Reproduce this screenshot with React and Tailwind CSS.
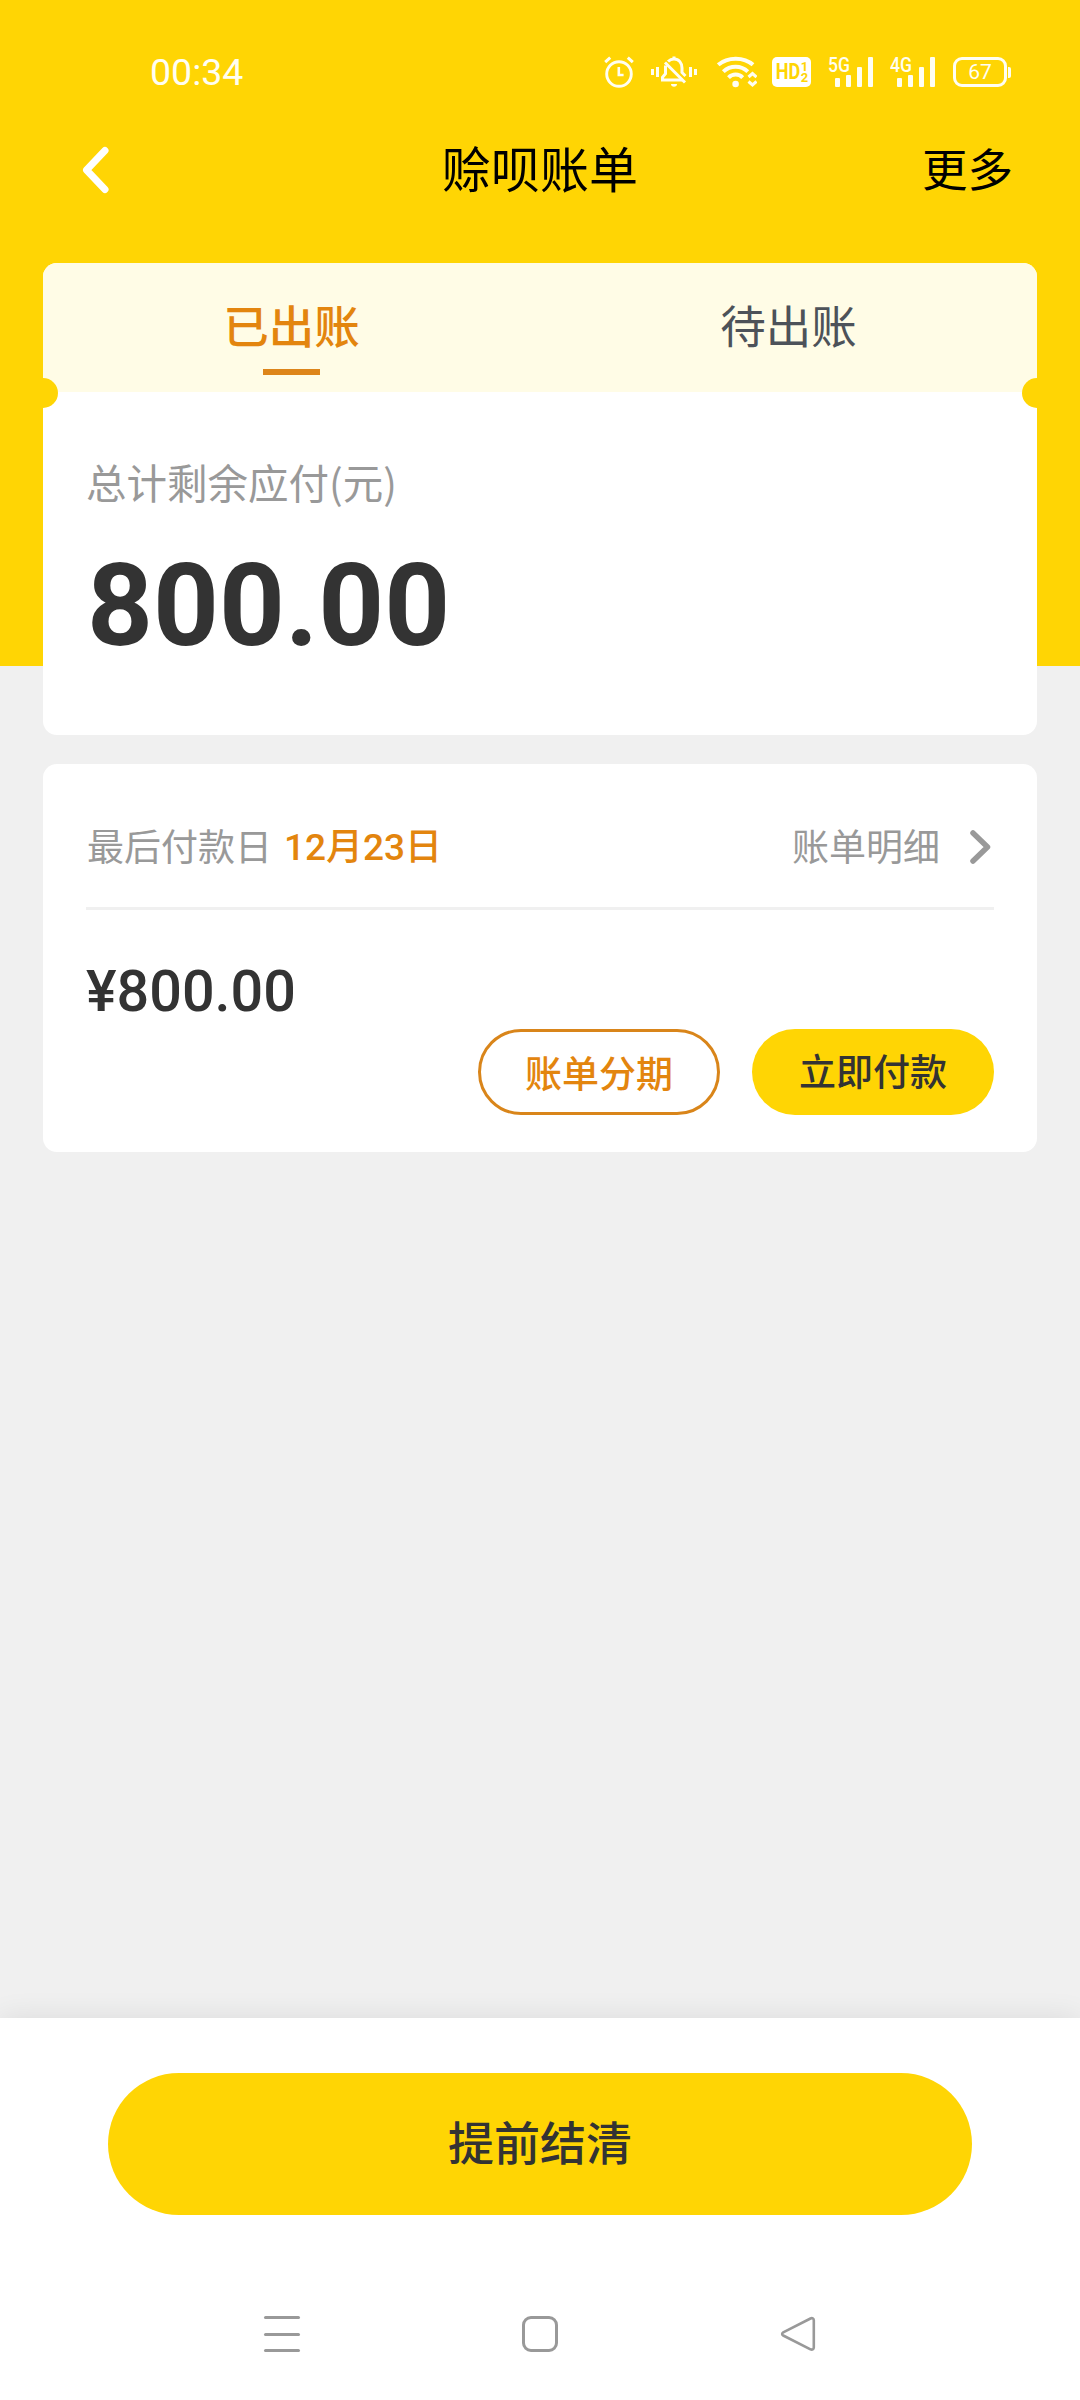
import { useState } from 'react'
import clsx from 'clsx'

function AlarmIcon() {
  return (
    <svg className="w-[30px] h-[32px]" viewBox="0 0 30 32" fill="none" stroke="currentColor">
      <circle cx="15" cy="18" r="12.3" strokeWidth="2.9" />
      <path d="M14.8 11v8h4.8" strokeWidth="2.6" />
      <path d="M1.2 6.2 6.2 1.6M28.8 6.2 23.8 1.6" strokeWidth="3" />
    </svg>
  )
}

function MuteIcon() {
  return (
    <svg className="w-[46px] h-[32px]" viewBox="0 0 46 32" fill="none" stroke="currentColor" strokeWidth="3">
      <path d="M1.5 13v6M6.5 11v10M39.5 11v10M44.5 13v6" />
      <path d="M17 5.5C19 3.6 21 3 23 3c5 0 8 4 8 9v4.5l3.500 3.500" />
      <path d="M14 6.500 34 26.500" />
      <path d="M14.500 9.500v8.200l-3 3.500v2.800h20" />
      <path d="M23 .5v3" />
      <path d="M20 28h6c0 1.800-1.200 2.800-3 2.800s-3-1-3-2.800Z" fill="currentColor" stroke="none" />
    </svg>
  )
}

function WifiIcon() {
  return (
    <svg className="w-[40px] h-[32px]" viewBox="0 0 40 32" fill="none" stroke="currentColor">
      <path d="M1.200 8.800C10.500 .6 27 .6 36 8.800" strokeWidth="4" />
      <path d="M6.300 15.600c7-6.600 17.700-6.600 24.500 0" strokeWidth="4" />
      <path d="M11.500 21.600c4-4 10.400-4 14.200 0" strokeWidth="4" />
      <circle cx="18.600" cy="28" r="3.300" fill="currentColor" stroke="none" />
      <path d="m31.500 21 4-3.500 4 3.500M31.500 25.500l4 3.500 4-3.500" strokeWidth="3" />
    </svg>
  )
}

function HdIcon() {
  return (
    <div className="w-[39px] h-[30px] rounded-[5px] bg-white flex items-center justify-center text-[#ffd504] font-bold font-[Roboto,sans-serif]">
      <span className="text-[22px] leading-[30px] inline-block scale-x-[0.82] -ml-[3px] -mr-[2px]">HD</span>
      <span className="flex flex-col text-[13px] leading-[11px] -mr-px">
        <span>1</span>
        <span>2</span>
      </span>
    </div>
  )
}

function Signal({ label }) {
  return (
    <div className="relative w-[45px] h-[30px]">
      <span className="absolute left-0 top-0 text-[20px] leading-[16px] font-[Roboto,sans-serif] font-medium origin-left scale-x-[0.88]">
        {label}
      </span>
      <div className="flex h-full items-end justify-end gap-[6px]">
        <i className="w-[5px] h-[9px] rounded-[1px] bg-current" />
        <i className="w-[5px] h-[12px] rounded-[1px] bg-current" />
        <i className="w-[5px] h-[20px] rounded-[1px] bg-current" />
        <i className="w-[5px] h-[30px] rounded-[1px] bg-current" />
      </div>
    </div>
  )
}

function Battery({ level }) {
  return (
    <div className="flex items-center gap-px">
      <div className="w-[54px] h-[30px] rounded-[9px] border-[3px] border-current flex items-center justify-center text-[21px] leading-[24px] font-[Roboto,sans-serif]">
        {level}
      </div>
      <div className="w-[3px] h-[11px] rounded-r-[2px] bg-current" />
    </div>
  )
}

function StatusBar() {
  return (
    <div className="h-[104px] pt-[40px] pl-[150px] pr-[69px] flex items-center justify-between text-[#fffef2]">
      <span className="font-[Roboto,sans-serif] text-[37.5px] leading-[64px]">00:34</span>
      <div className="flex items-center">
        <AlarmIcon />
        <div className="ml-[17px]"><MuteIcon /></div>
        <div className="ml-[20px]"><WifiIcon /></div>
        <div className="ml-[15px]"><HdIcon /></div>
        <div className="ml-[17px]"><Signal label="5G" /></div>
        <div className="ml-[17px]"><Signal label="4G" /></div>
        <div className="ml-[18px]"><Battery level={67} /></div>
      </div>
    </div>
  )
}

const tabs = [
  { key: 'billed', label: '已出账' },
  { key: 'pending', label: '待出账' }
]

function App() {
  const [activeTab, setActiveTab] = useState('billed')

  return (
    <div className="w-[1080px] h-[2400px] flex flex-col bg-[#f0f0f0] overflow-hidden font-['Noto_Sans_CJK_SC',sans-serif] text-[#333]">
      {/* Header */}
      <header className="h-[666px] shrink-0 bg-[#ffd504]">
        <StatusBar />
        <div className="h-[125px] pl-[82px] pr-[67px] grid grid-cols-[200px_1fr_200px] items-center text-black">
          <button>
            <svg className="w-[27px] h-[48px] relative top-[3px]" viewBox="0 0 27 48" fill="none" stroke="#fff" strokeWidth="7" strokeLinecap="round" strokeLinejoin="round">
              <path d="M23 4.5 4.5 24 23 43.5" />
            </svg>
          </button>
          <h1 className="text-[49px] leading-[64px] text-center pr-[15px]">赊呗账单</h1>
          <button className="text-[45.5px] leading-[64px] text-right">更多</button>
        </div>
      </header>

      <main className="relative -mt-[403px] px-[43px] flex-1">
        {/* Total */}
        <section className="relative h-[472px] rounded-[14px] bg-white overflow-hidden">
          <div className="h-[129px] flex bg-[#fffce6]">
            {tabs.map((tab) => (
              <button
                key={tab.key}
                onClick={() => setActiveTab(tab.key)}
                className={clsx(
                  'flex-1 pt-[29px] flex flex-col items-center text-[45.5px] leading-[64px]',
                  activeTab === tab.key ? 'font-medium text-[#e3850e]' : 'text-[#4d5259]'
                )}
              >
                {tab.label}
                {activeTab === tab.key && <span className="mt-[13px] w-[57px] h-[6px] bg-[#dd851a]" />}
              </button>
            ))}
          </div>
          <span className="absolute -left-[15px] top-[115px] size-[30px] rounded-full bg-[#ffd504]" />
          <span className="absolute -right-[15px] top-[115px] size-[30px] rounded-full bg-[#ffd504]" />
          <div className="pt-[60px] pl-[43px]">
            <p className="text-[40.5px] leading-[60px] text-[#999]">总计剩余应付(元)</p>
            <p className="mt-[34px] pl-px font-[Roboto,sans-serif] font-bold text-[115px] leading-[120px]">800.00</p>
          </div>
        </section>

        {/* Bill */}
        <section className="mt-[29px] h-[388px] px-[43px] rounded-[14px] bg-white">
          <div className="h-[146px] pt-[53px] border-b-[3px] border-[#f0f0f0] flex justify-between text-[37px] leading-[56px] text-[#999]">
            <div className="flex pl-px">
              <span>最后付款日</span>
              <span className="ml-[12px] pt-[3px] font-medium text-[#e3850e] font-[Roboto,'Noto_Sans_CJK_SC',sans-serif]">12月23日</span>
            </div>
            <button className="flex items-start pr-[3px]">
              账单明细
              <svg className="ml-[29px] mt-[12px] w-[22px] h-[36px]" viewBox="0 0 22 36" fill="none" stroke="#999" strokeWidth="5.5" strokeLinecap="round" strokeLinejoin="round">
                <path d="M4 4l14.5 14L4 32" />
              </svg>
            </button>
          </div>
          <p className="pt-[50px] font-[Roboto,sans-serif] font-medium text-[57.5px] leading-[64px]">¥800.00</p>
          <div className="mt-[5px] flex justify-end gap-[32px] font-medium text-[37px]">
            <button className="w-[242px] h-[86px] rounded-full border-[3px] border-[#d9851a] text-[#e3850e] leading-[80px]">账单分期</button>
            <button className="w-[242px] h-[86px] rounded-full bg-[#ffd504] leading-[82px] pb-[4px]">立即付款</button>
          </div>
        </section>
      </main>

      {/* Footer */}
      <footer className="relative h-[382px] shrink-0 bg-white shadow-[0_0_28px_rgba(0,0,0,0.09)] pt-[55px]">
        <button className="block mx-auto w-[864px] h-[142px] rounded-full bg-[#ffd504] font-medium text-[46px] leading-[134px] pb-[8px]">
          提前结清
        </button>
        <nav className="mt-[101px] px-[264px] flex justify-between text-[#999]">
          <div className="w-[36px] h-[36px] flex flex-col justify-between">
            <i className="h-[3px] rounded-full bg-current" />
            <i className="h-[3px] rounded-full bg-current" />
            <i className="h-[3px] rounded-full bg-current" />
          </div>
          <div className="size-[36px] rounded-[9px] border-[3px] border-current" />
          <svg className="size-[36px]" viewBox="0 0 36 36" fill="none" stroke="currentColor" strokeWidth="2.6" strokeLinejoin="round">
            <path d="M30.5 2.5 3.2 16.3c-1.400.8-1.400 2.400 0 3.200L30.5 33.3c1.700.8 3.300 0 3.300-1.800V4.300c0-1.800-1.600-2.600-3.300-1.800Z" />
          </svg>
        </nav>
      </footer>
    </div>
  )
}

export default App
